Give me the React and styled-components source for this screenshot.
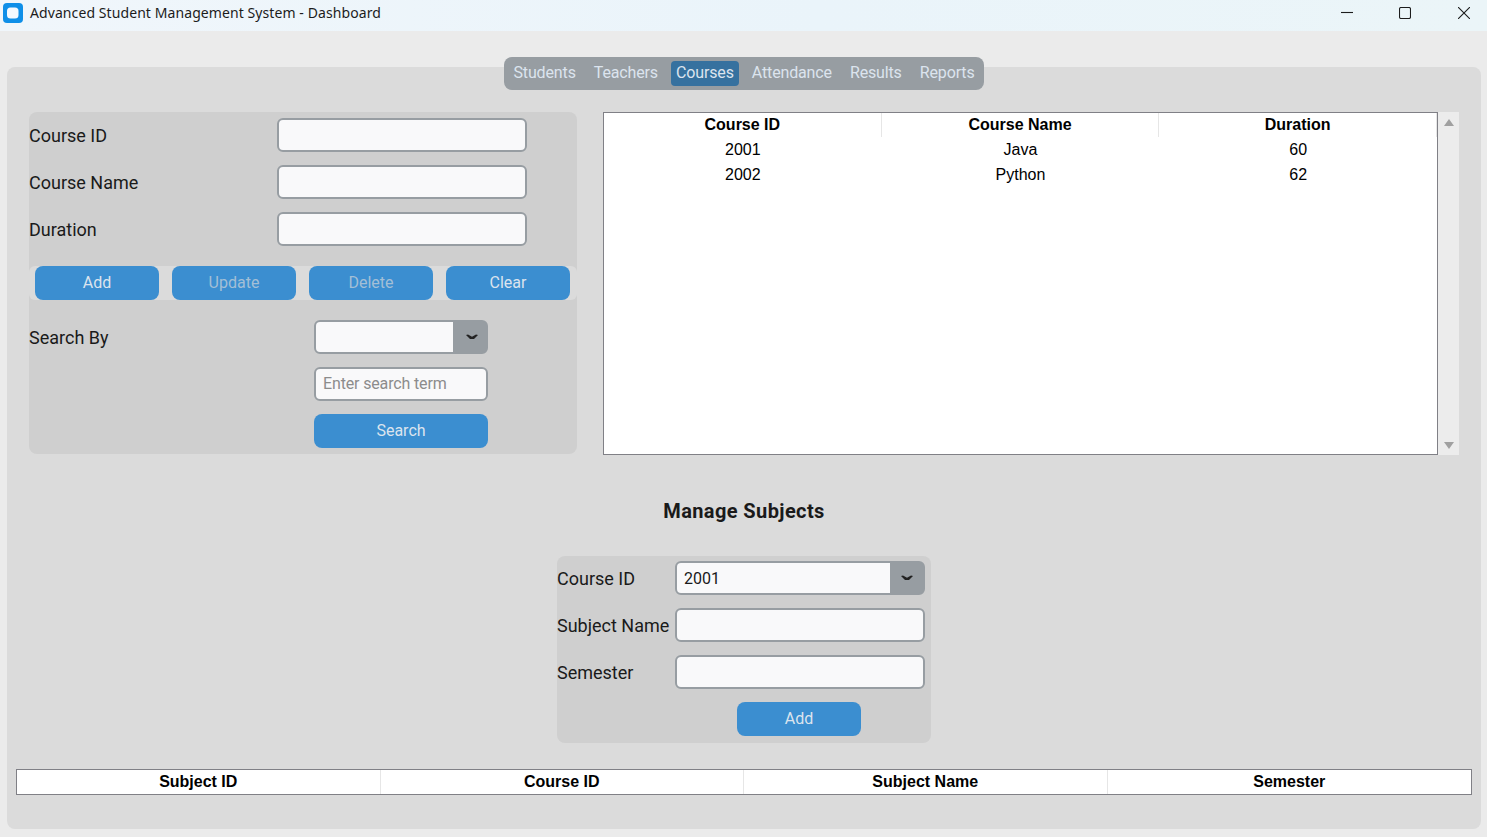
import React from 'react';
import styled, { createGlobalStyle } from 'styled-components';

const GlobalStyle = createGlobalStyle`
  html, body {
    margin: 0;
    padding: 0;
    height: 100%;
    background: #ebebeb;
    overflow: hidden;
  }
  * {
    box-sizing: border-box;
  }
`;

const Window = styled.div`
  display: flex;
  flex-direction: column;
  width: 1487px;
  height: 837px;
  background: #ebebeb;
  font-family: Roboto, sans-serif;
  color: #1a1a1a;
`;

const TitleBar = styled.header`
  display: flex;
  align-items: center;
  flex: 0 0 31px;
  height: 31px;
  padding: 0 0 6px 3px;
  background: linear-gradient(90deg, #f0f6fb 0%, #eaf4fa 55%, #ebf5f8 100%);
`;

const AppIcon = styled.svg`
  flex: none;
  width: 20px;
  height: 20px;
  margin-right: 7px;
`;

const TitleText = styled.span`
  flex: 1;
  font-family: 'Noto Sans', sans-serif;
  font-size: 14px;
  letter-spacing: 0.085px;
  color: #1c1c1c;
`;

const WindowControls = styled.div`
  display: flex;
  align-items: center;
  gap: 46px;
  padding-right: 17px;
`;

const ControlIcon = styled.svg`
  display: block;
  width: 12px;
  height: 12px;
  fill: none;
  stroke: #1c1c1c;
  stroke-width: 1.1;

  &:last-child {
    margin-left: 1px;
  }
`;

const Stage = styled.main`
  display: flex;
  flex-direction: column;
  align-items: center;
  flex: 1;
  padding: 26px 6px 8px 7px;
`;

const TabBar = styled.nav`
  position: relative;
  z-index: 1;
  display: flex;
  gap: 8px;
  height: 33px;
  margin-bottom: -23px;
  padding: 4px;
  background: #979da2;
  border-radius: 8px;
`;

const Tab = styled.button`
  height: 25px;
  padding: 0 5px 2px;
  border: 0;
  border-radius: 4px;
  background: ${({ $active }) => ($active ? '#36719f' : 'transparent')};
  color: #dce4ee;
  font-family: Roboto, sans-serif;
  font-size: 16px;
  letter-spacing: -0.14px;
`;

const TabPanel = styled.section`
  align-self: stretch;
  flex: 1;
  padding-top: 45px;
  background: #dbdbdb;
  border-radius: 8px;
`;

const TopRow = styled.div`
  display: flex;
  align-items: flex-start;
  gap: 26px;
  padding-left: 22px;
`;

const FormCard = styled.div`
  width: 548px;
  height: 342px;
  padding-top: 6px;
  background: #cfcfcf;
  border-radius: 8px;
`;

const FieldGrid = styled.div`
  display: grid;
  grid-template-columns: 248px 250px;
  row-gap: 13px;
  align-items: center;
`;

const Label = styled.label`
  font-size: 18px;
  color: #1a1a1a;
`;

const TextBox = styled.input`
  display: block;
  width: ${({ $width }) => $width}px;
  height: 34px;
  padding: 0 7px 2px;
  border: 2px solid #979da2;
  border-radius: 6px;
  outline: 0;
  background: #f9f9fa;
  color: #1a1a1a;
  font-family: Roboto, sans-serif;
  font-size: 16px;
  letter-spacing: -0.15px;

  &::placeholder {
    color: #8c8c8c;
    opacity: 1;
  }
`;

const ButtonStrip = styled.div`
  display: flex;
  gap: 13px;
  height: 34px;
  margin-top: 20px;
  padding-left: 6px;
  background: #dbdbdb;
  border-radius: 6px;
`;

const ActionButton = styled.button`
  display: block;
  flex: none;
  width: 124px;
  height: 34px;
  padding: 0 0 2px;
  border: 0;
  border-radius: 8px;
  background: #3b8ed0;
  color: ${({ $muted }) => ($muted ? '#a3bfd6' : '#dce4ee')};
  font-family: Roboto, sans-serif;
  font-size: 16px;
`;

const SearchGrid = styled.div`
  display: grid;
  grid-template-columns: 285px 174px;
  row-gap: 13px;
  align-items: center;
  margin-top: 20px;
`;

const SearchControl = styled.div`
  grid-column: 2;
`;

const WideButton = styled(ActionButton)`
  width: 174px;
`;

const Combo = styled.div`
  display: flex;
  width: ${({ $width }) => $width}px;
  height: 34px;
  border: 2px solid #979da2;
  border-radius: 6px;
  background: #979da2;
`;

const ComboValue = styled.div`
  flex: 1;
  padding: 1px 0 0 7px;
  border-radius: 4px 0 0 4px;
  background: #f9f9fa;
  font-size: 16px;
  line-height: 29px;
  color: #1a1a1a;
`;

const ComboArrow = styled.div`
  display: flex;
  align-items: center;
  justify-content: flex-end;
  flex: 0 0 33px;
  padding-right: ${({ $inset }) => $inset}px;
`;

const Chevron = styled.svg`
  width: 12px;
  height: 6px;
  fill: #222;
`;

const TreeWrap = styled.div`
  display: flex;
  height: 343px;
`;

const Tree = styled.div`
  width: 835px;
  border: 1px solid #808086;
  background: #fff;
  font-family: 'Liberation Sans', Arial, sans-serif;
  font-size: 16px;
  color: #000;
`;

const Cells = styled.div`
  display: grid;
  grid-template-columns: repeat(${({ $cols }) => $cols}, 1fr);
  height: ${({ $height }) => $height}px;
  line-height: ${({ $height }) => $height}px;
  text-align: center;
`;

const HeadCell = styled.div`
  font-weight: 700;
  border-right: 1px solid #e6e6e6;
`;

const ScrollBar = styled.div`
  display: flex;
  flex-direction: column;
  align-items: center;
  justify-content: space-between;
  width: 21px;
  padding: 7px 0 6px;
  background: #ececec;
`;

const ScrollArrow = styled.svg`
  width: 10px;
  height: 7px;
  fill: #a0a0a0;
`;

const SectionTitle = styled.h2`
  margin: 44px 0 33px;
  font-size: 20px;
  font-weight: 700;
  letter-spacing: 0.4px;
  line-height: 24px;
  text-align: center;
  color: #1a1a1a;
`;

const SubjectCard = styled.div`
  display: grid;
  grid-template-columns: 118px 250px;
  row-gap: 13px;
  align-items: center;
  align-content: start;
  width: 374px;
  height: 187px;
  margin: 0 auto;
  padding-top: 5px;
  background: #cfcfcf;
  border-radius: 8px;
`;

const SubjectSubmit = styled(ActionButton)`
  grid-column: 2;
  margin-left: 62px;
`;

const SubjectTable = styled.div`
  margin: 26px 9px 0;
  border: 1px solid #808086;
  background: #fff;
  font-family: 'Liberation Sans', Arial, sans-serif;
  font-size: 16px;
  color: #000;

  ${HeadCell}:last-child {
    border-right: 0;
  }
`;

const courseFields = ['Course ID', 'Course Name', 'Duration'];
const courseActions = [
  { label: 'Add' },
  { label: 'Update', muted: true },
  { label: 'Delete', muted: true },
  { label: 'Clear' }
];
const tabs = ['Students', 'Teachers', 'Courses', 'Attendance', 'Results', 'Reports'];
const courseColumns = ['Course ID', 'Course Name', 'Duration'];
const courses = [
  ['2001', 'Java', '60'],
  ['2002', 'Python', '62']
];
const subjectColumns = ['Subject ID', 'Course ID', 'Subject Name', 'Semester'];

const ComboBox = ({ width, value, inset }) => (
  <Combo $width={width}>
    <ComboValue>{value}</ComboValue>
    <ComboArrow $inset={inset}>
      <Chevron viewBox="0 0 12 6">
        <path d="M0 1 L2 0.5 L6 2.8 L10 0.5 L12 1 L8 5 H4 Z" />
      </Chevron>
    </ComboArrow>
  </Combo>
);

const App = () => (
  <Window>
    <GlobalStyle />
    <TitleBar>
      <AppIcon viewBox="0 0 20 20">
        <rect width="20" height="20" rx="4" fill="#0f8fe8" />
        <rect x="4" y="4.5" width="11.5" height="11" rx="3.5" fill="#f4f9fe" />
      </AppIcon>
      <TitleText>Advanced Student Management System - Dashboard</TitleText>
      <WindowControls>
        <ControlIcon viewBox="0 0 12 12">
          <path d="M0 5.5 H12" />
        </ControlIcon>
        <ControlIcon viewBox="0 0 12 12">
          <rect x="0.5" y="0.5" width="11" height="11" rx="1.5" />
        </ControlIcon>
        <ControlIcon viewBox="0 0 12 12">
          <path d="M0 0 L12 12 M12 0 L0 12" />
        </ControlIcon>
      </WindowControls>
    </TitleBar>

    <Stage>
      <TabBar>
        {tabs.map((tab) => (
          <Tab key={tab} $active={tab === 'Courses'}>
            {tab}
          </Tab>
        ))}
      </TabBar>

      <TabPanel>
        <TopRow>
          <FormCard>
            <FieldGrid>
              {courseFields.map((field) => (
                <React.Fragment key={field}>
                  <Label>{field}</Label>
                  <TextBox $width={250} />
                </React.Fragment>
              ))}
            </FieldGrid>
            <ButtonStrip>
              {courseActions.map(({ label, muted }) => (
                <ActionButton key={label} $muted={muted}>
                  {label}
                </ActionButton>
              ))}
            </ButtonStrip>
            <SearchGrid>
              <Label>Search By</Label>
              <ComboBox width={174} inset={8} />
              <SearchControl>
                <TextBox $width={174} placeholder="Enter search term" />
              </SearchControl>
              <SearchControl>
                <WideButton>Search</WideButton>
              </SearchControl>
            </SearchGrid>
          </FormCard>

          <TreeWrap>
            <Tree>
              <Cells $cols={3} $height={24}>
                {courseColumns.map((col) => (
                  <HeadCell key={col}>{col}</HeadCell>
                ))}
              </Cells>
              {courses.map((row) => (
                <Cells key={row[0]} $cols={3} $height={25}>
                  {row.map((cell) => (
                    <div key={cell}>{cell}</div>
                  ))}
                </Cells>
              ))}
            </Tree>
            <ScrollBar>
              <ScrollArrow viewBox="0 0 10 7">
                <path d="M5 0 L10 7 H0 Z" />
              </ScrollArrow>
              <ScrollArrow viewBox="0 0 10 7">
                <path d="M0 0 H10 L5 7 Z" />
              </ScrollArrow>
            </ScrollBar>
          </TreeWrap>
        </TopRow>

        <SectionTitle>Manage Subjects</SectionTitle>

        <SubjectCard>
          <Label>Course ID</Label>
          <ComboBox width={250} value="2001" inset={10} />
          <Label>Subject Name</Label>
          <TextBox $width={250} />
          <Label>Semester</Label>
          <TextBox $width={250} />
          <SubjectSubmit>Add</SubjectSubmit>
        </SubjectCard>

        <SubjectTable>
          <Cells $cols={4} $height={24}>
            {subjectColumns.map((col) => (
              <HeadCell key={col}>{col}</HeadCell>
            ))}
          </Cells>
        </SubjectTable>
      </TabPanel>
    </Stage>
  </Window>
);

export default App;
